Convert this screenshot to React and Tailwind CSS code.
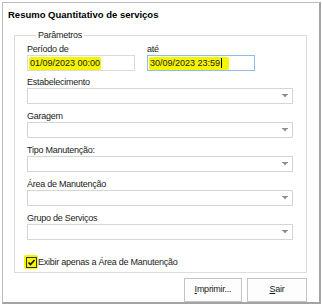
const Arrow = () => (
  <svg width="6" height="4" viewBox="0 0 6 4" className="shrink-0">
    <path d="M0 0h6v1H0z M1 1h4L3 3.6z" fill="#8c8c8c" />
  </svg>
);

const Combo = ({ label }) => (
  <div className="flex flex-col">
    <span className="leading-[12px] tracking-[-0.25px]">{label}</span>
    <div className="flex h-[16px] w-[266px] items-center justify-end border border-[#d6d6d6] bg-white pr-[4px]">
      <Arrow />
    </div>
  </div>
);

const App = () => {
  return (
    <div className="h-[308px] w-[322px] bg-white pl-[2px] pt-[2px] font-['Liberation_Sans',Arial,sans-serif] text-[9px] text-[#1b1b1b]">
      <div className="flex h-[302px] w-[319px] flex-col overflow-hidden border-l border-t border-[#bdbdbd] border-r-2 border-b-2 border-r-[#a4a4a4] border-b-[#a4a4a4] bg-white">
        <div className="ml-[5px] mt-[6px] text-[9.5px] font-bold leading-[12px] text-black">
          Resumo Quantitativo de serviços
        </div>

        <fieldset className="ml-[11px] mt-[8px] h-[248px] w-[293px] border border-[#dcdcdc] pl-[12px] pt-[2px]">
          <legend className="ml-[9px] px-[2px] leading-[12px] tracking-[-0.25px]">Parâmetros</legend>

          <div className="flex gap-[12px]">
            <div className="flex w-[108px] flex-col">
              <span className="leading-[12px] tracking-[-0.25px]">Período de</span>
              <div className="flex h-[16px] items-center border border-[#d9d9d9] bg-white pl-[1px]">
                <span className="rounded-[2px] bg-[#f5f500] px-[1px] leading-[13px]">01/09/2023 00:00</span>
              </div>
            </div>
            <div className="flex w-[108px] flex-col">
              <span className="leading-[12px] tracking-[-0.25px]">até</span>
              <div className="flex h-[16px] items-center border border-[#8fbce8] bg-white pl-[1px]">
                <span className="flex items-center rounded-[2px] bg-[#f5f500] px-[1px] leading-[13px]">
                  30/09/2023 23:59
                  <span className="ml-[1px] h-[10px] w-[1px] bg-black" />
                  <span className="w-[6px]" />
                </span>
              </div>
            </div>
          </div>

          <div className="mt-[5px] flex flex-col gap-[6px]">
            <Combo label="Estabelecimento" />
            <Combo label="Garagem" />
            <Combo label="Tipo Manutenção:" />
            <Combo label="Área de Manutenção" />
            <Combo label="Grupo de Serviços" />
          </div>

          <div className="ml-[-3px] mt-[15px] flex items-center">
            <div className="flex h-[14px] w-[14px] items-center justify-center rounded-[2px] bg-[#f5f500]">
              <div className="flex h-[11px] w-[11px] items-center justify-center border border-[#333] bg-white/0">
                <svg width="9" height="9" viewBox="0 0 9 9">
                  <path d="M1.5 4.5l2 2 4-4.5" stroke="#111" strokeWidth="1.6" fill="none" />
                </svg>
              </div>
            </div>
            <span className="ml-[0px] leading-[14px] tracking-[-0.25px]">Exibir apenas a Área de Manutenção</span>
          </div>
        </fieldset>

        <div className="mr-[12px] mt-[5px] flex justify-end gap-[5px]">
          <button className="flex h-[24px] w-[58px] items-center justify-center border border-[#c4c4c4] bg-[#fdfdfd] tracking-[-0.25px]">
            <span>
              <span className="underline">I</span>mprimir...
            </span>
          </button>
          <button className="flex h-[24px] w-[60px] items-center justify-center border border-[#c4c4c4] bg-[#fdfdfd] tracking-[-0.25px]">
            <span>
              <span className="underline">S</span>air
            </span>
          </button>
        </div>
      </div>
    </div>
  );
};

export default App;
